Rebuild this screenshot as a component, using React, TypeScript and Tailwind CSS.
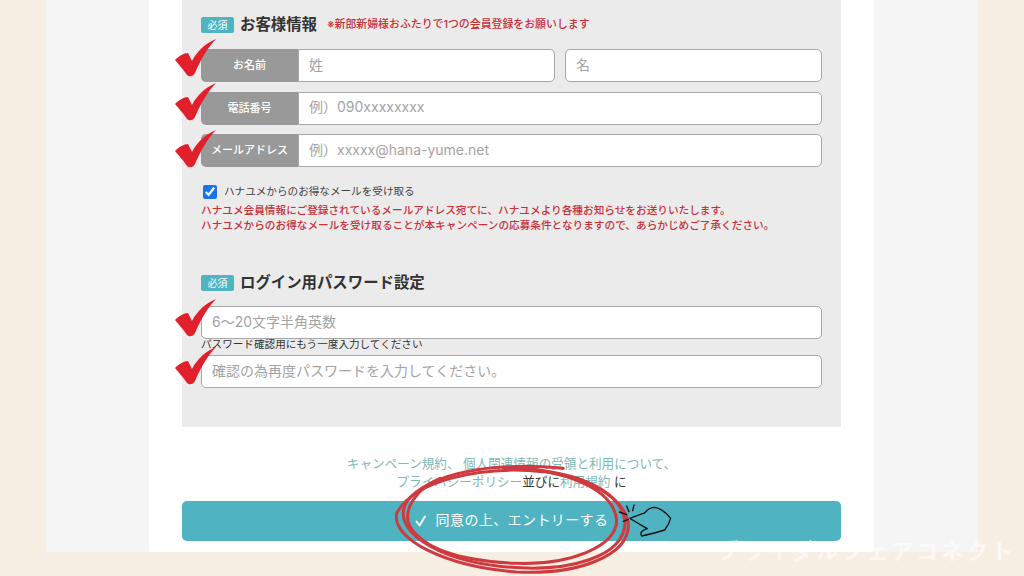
const CJK = "font-['Inter','Noto_Sans_CJK_JP','Noto_Sans',sans-serif]";

function CheckMark({ className }: { className: string }) {
  return (
    <svg viewBox="0 0 41 38" className={`absolute w-[41px] h-[38px] ${className}`}>
      <path
        d="M0 21 C4 17 9 14 13 14 L17 22 C22 12 31 4 41 0 C33 8 25 22 20 34 C18 38 14 38 12 36 C8 30 4 26 0 21Z"
        fill="#e2202c"
      />
    </svg>
  );
}

function Badge() {
  return (
    <span className="flex items-center justify-center w-[33px] h-[16px] rounded-[2px] bg-[#4fb3c1] text-white text-[10px] leading-none">
      必須
    </span>
  );
}

function TextInput({ placeholder, className = "" }: { placeholder: string; className?: string }) {
  return (
    <input
      placeholder={placeholder}
      className={`min-w-0 h-full bg-white border border-[#a8a8a8] px-[10px] pb-[3px] text-[14px] placeholder:text-[#a3a3a3] outline-none ${className}`}
    />
  );
}

function LabeledRow({ label, children, mark }: { label: string; children: React.ReactNode; mark: string }) {
  return (
    <div className="relative flex h-[33px]">
      <div className="flex items-center justify-center w-[97px] shrink-0 rounded-l-[5px] bg-[#999999] text-white text-[11px] font-medium">
        {label}
      </div>
      {children}
      <CheckMark className={mark} />
    </div>
  );
}

export default function App() {
  return (
    <div className={`relative w-[1024px] h-[576px] overflow-hidden bg-[#f7efe4] text-[#333] ${CJK}`}>
      <div className="ml-[46px] w-[932px] h-[552px] bg-[#f5f5f5]">
        <div className="ml-[103px] w-[725px] h-full bg-white px-[33px]">
          <div className="h-[427px] bg-[#ebebeb] px-[19px] pt-[14px]">
            {/* お客様情報 */}
            <div className="flex items-center h-[21px]">
              <Badge />
              <h2 className="ml-[6px] text-[15.4px] font-bold text-[#333]">お客様情報</h2>
              <p className="ml-[10px] text-[10.9px] font-medium text-[#c8303a]">
                ※新郎新婦様おふたりで1つの会員登録をお願いします
              </p>
            </div>
            <div className="mt-[14px] flex flex-col gap-[9.5px]">
              <LabeledRow label="お名前" mark="left-[-26px] top-[-10px]">
                <TextInput placeholder="姓" className="w-[257px] rounded-r-[5px]" />
                <TextInput placeholder="名" className="ml-[10px] w-[257px] rounded-[5px]" />
              </LabeledRow>
              <LabeledRow label="電話番号" mark="left-[-26px] top-[-9px]">
                <TextInput placeholder="例）090xxxxxxxx" className="flex-1 rounded-r-[5px]" />
              </LabeledRow>
              <LabeledRow label="メールアドレス" mark="left-[-26px] top-[-4px]">
                <TextInput placeholder="例）xxxxx@hana-yume.net" className="flex-1 rounded-r-[5px]" />
              </LabeledRow>
            </div>

            <label className="mt-[17px] ml-[2px] flex items-center gap-[7px] h-[16px] text-[10.6px] text-[#444]">
              <input type="checkbox" defaultChecked className="w-[14px] h-[14px] accent-[#1a73e8]" />
              ハナユメからのお得なメールを受け取る
            </label>
            <div className="mt-[3px] text-[10.65px] leading-[15px] font-medium text-[#c8303a]">
              <p>ハナユメ会員情報にご登録されているメールアドレス宛てに、ハナユメより各種お知らせをお送りいたします。</p>
              <p>ハナユメからのお得なメールを受け取ることが本キャンペーンの応募条件となりますので、あらかじめご了承ください。</p>
            </div>

            {/* ログイン用パスワード設定 */}
            <div className="mt-[39px] flex items-center h-[21px]">
              <Badge />
              <h2 className="ml-[6px] text-[15.4px] font-bold text-[#333]">ログイン用パスワード設定</h2>
            </div>
            <div className="relative mt-[13px] h-[33px] flex">
              <TextInput placeholder="6〜20文字半角英数" className="flex-1 rounded-[5px]" />
              <CheckMark className="left-[-26px] top-[-7px]" />
            </div>
            <p className="h-[16px] text-[10.6px] leading-[12px] text-[#333]">
              パスワード確認用にもう一度入力してください
            </p>
            <div className="relative h-[33px] flex">
              <TextInput placeholder="確認の為再度パスワードを入力してください。" className="flex-1 rounded-[5px]" />
              <CheckMark className="left-[-26px] top-[-8px]" />
            </div>
          </div>

          {/* 規約 */}
          <div className="mt-[28px] text-center text-[12.6px] leading-[18px] text-[#333]">
            <p className="text-[#7fb8b6]">キャンペーン規約、 個人関連情報の受領と利用について、</p>
            <p>
              <span className="text-[#7fb8b6]">プライバシーポリシー</span>並びに
              <span className="text-[#7fb8b6]">利用規約</span> に
            </p>
          </div>
          <button className="mt-[10px] pb-[3px] flex items-center justify-center gap-[9px] w-full h-[40px] rounded-[5px] bg-[#4fb3c1] text-white text-[14px] tracking-[0.4px]">
            <svg viewBox="0 0 12 12" className="w-[12px] h-[12px] mt-[3px]" fill="none">
              <path d="M1.5 6.5 L4.5 10.5 L10 1.5" stroke="white" strokeWidth="1.9" strokeLinecap="round" strokeLinejoin="round" />
            </svg>
            同意の上、エントリーする
          </button>
        </div>
      </div>

      {/* 手書きの丸と指 */}
      <svg viewBox="0 0 1110 378" className="absolute left-[330px] top-[450px] w-[370px] h-[126px]" fill="none">
        <g stroke="#cf3a40" strokeWidth="9" strokeLinecap="round">
          <path d="M700 55 C500 35 300 65 230 155 C180 240 320 330 520 350 C720 370 880 320 885 220 C880 130 760 65 560 55" />
          <path d="M640 65 C440 45 250 95 200 190 C185 270 350 350 560 366 C740 375 895 320 895 225 C890 150 780 75 600 60" />
          <path d="M330 85 C260 115 215 180 240 230 C290 310 430 335 560 340 C720 345 860 290 860 210 C850 115 700 55 520 53" />
        </g>
        <g stroke="#111" strokeWidth="4" strokeLinecap="round" strokeLinejoin="round">
          <path d="M900 205 C915 198 935 192 945 188 C950 178 965 172 975 172 C990 175 1010 190 1022 205 C1018 220 1010 232 1004 240 C980 248 955 254 935 258 C930 250 932 242 952 236 C935 226 915 216 900 205Z" />
          <path d="M868 186 L890 194 M880 214 L895 208 M890 168 L897 185 M912 165 L908 182" />
        </g>
      </svg>

      <p className="absolute left-[717px] top-[535px] text-[22px] leading-[32px] tracking-[3px] font-bold text-white/60 whitespace-nowrap">
        ブライダルフェアコネクト
      </p>
    </div>
  );
}
